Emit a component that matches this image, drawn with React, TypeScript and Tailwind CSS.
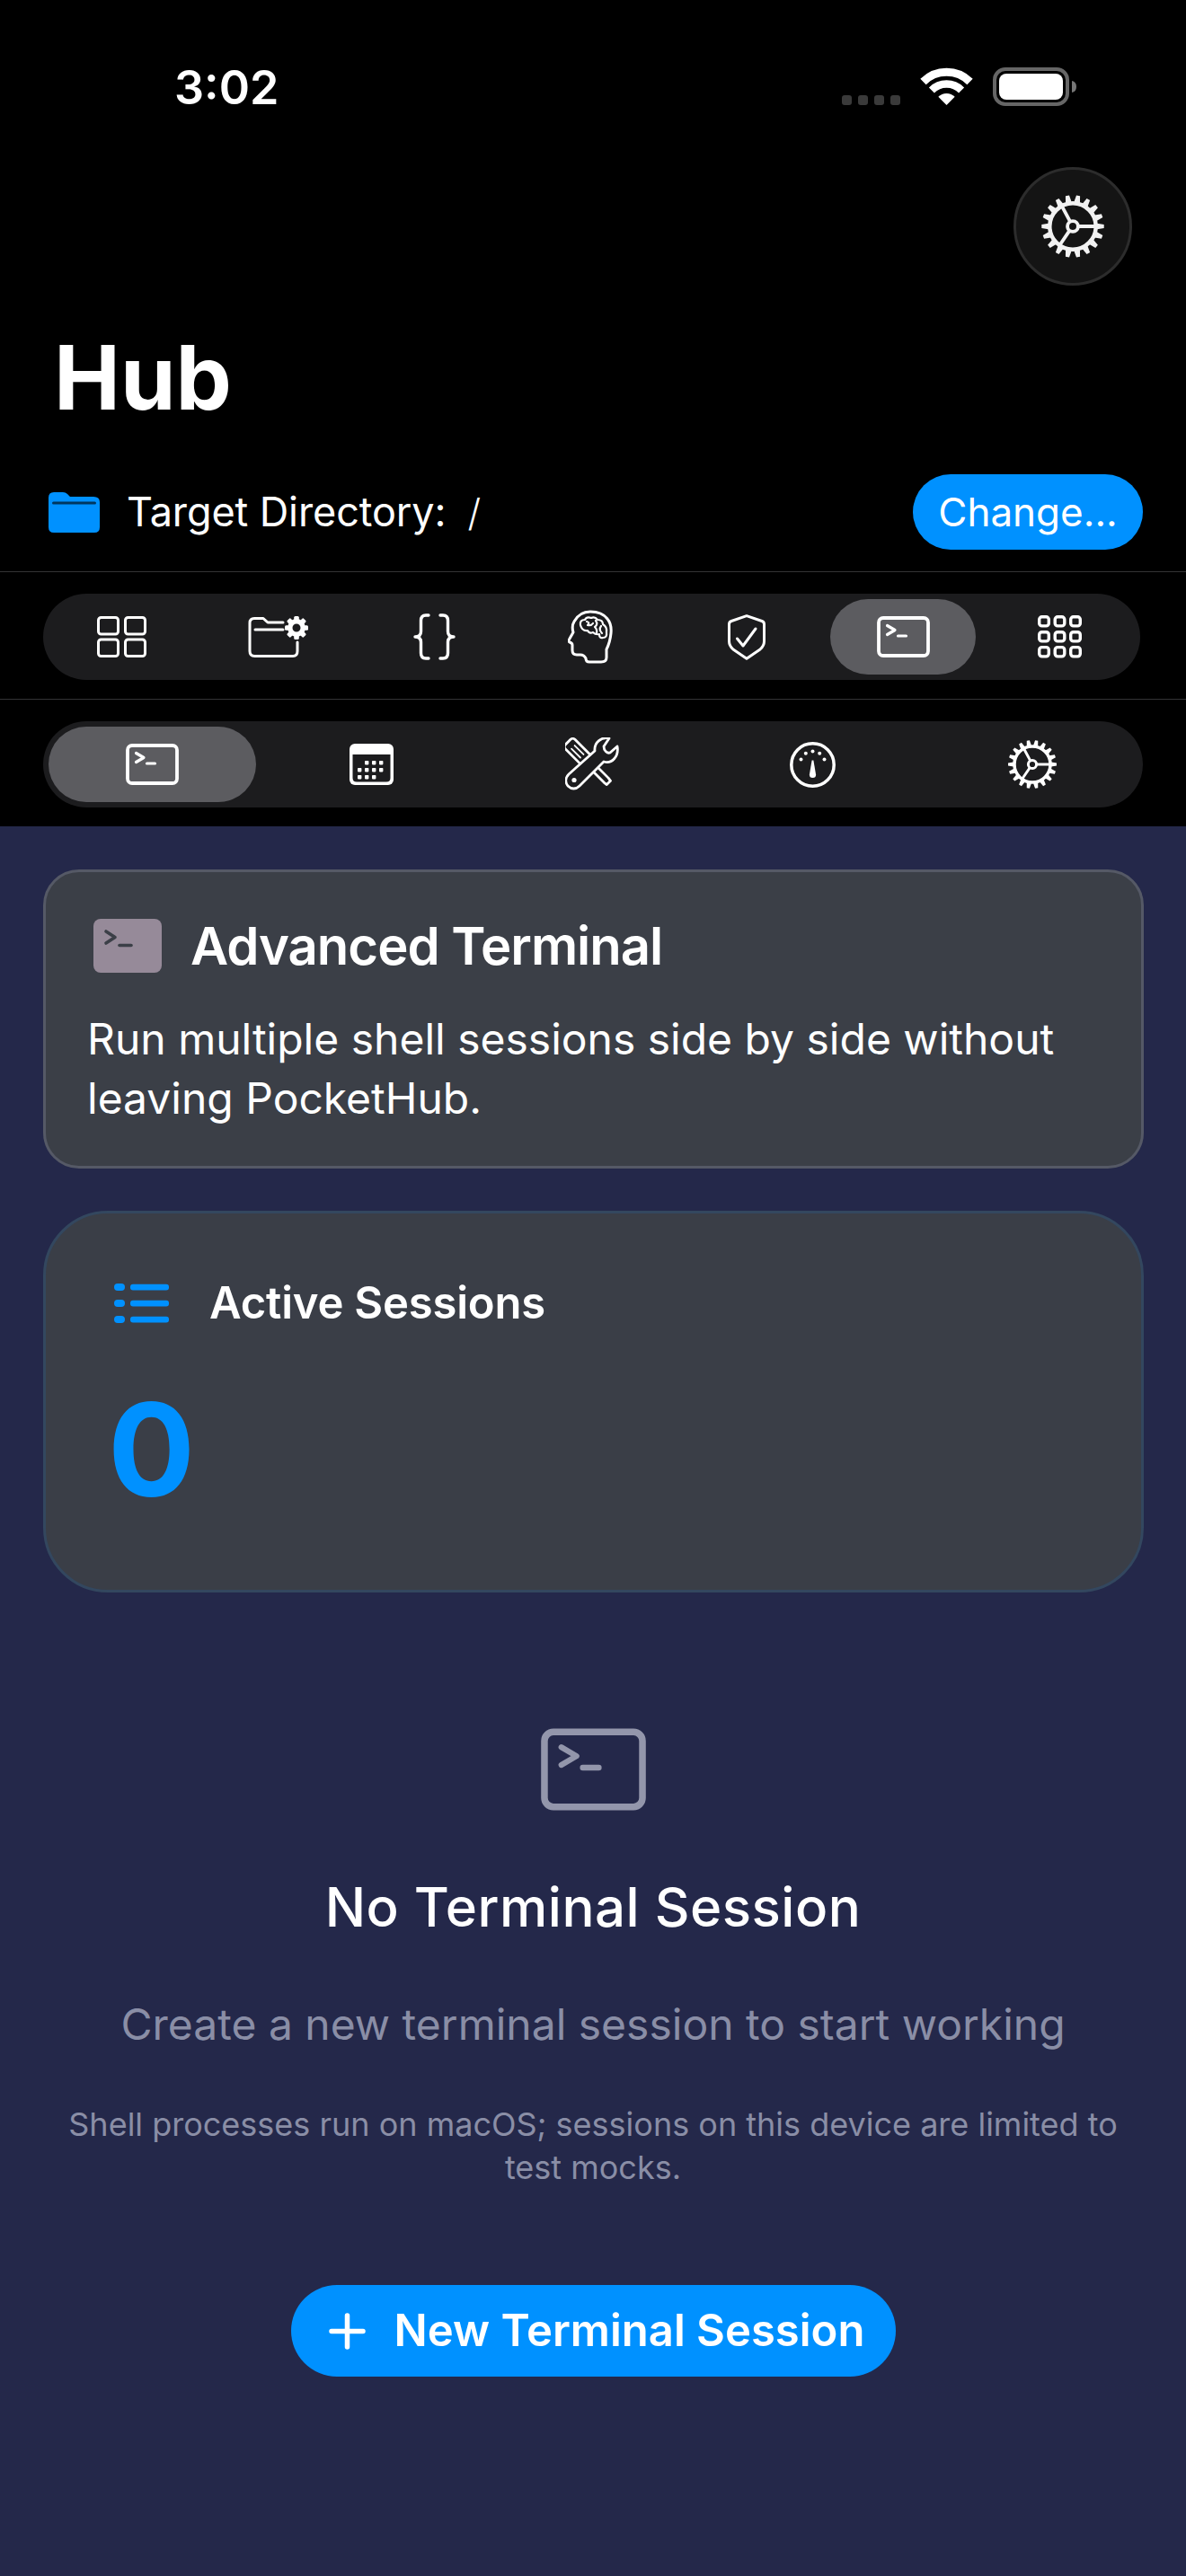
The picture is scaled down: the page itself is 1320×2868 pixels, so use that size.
import React from "react";

const cog = Array.from({ length: 18 }, (_, i) => i * 20);

function SpokeGear({ size, color = "#fff" }: { size: number; color?: string }) {
  return (
    <svg width={size} height={size} viewBox="-28 -28 56 56" fill="none" stroke={color}>
      <circle r="20" strokeWidth="3.5" />
      {cog.map((a) => (
        <path key={a} d="M-2.6 -21 L-1.6 -27 H1.6 L2.6 -21 Z" fill={color} stroke="none" transform={`rotate(${a + 10})`} />
      ))}
      <circle r="4.6" strokeWidth="3" />
      <path d="M5 0 H20 M-2.4 -4.4 L-9.6 -17.8 M-3 4 L-11.5 16.5" strokeWidth="3" />
    </svg>
  );
}

function TerminalIcon({ w, h, color = "#fff" }: { w: number; h: number; color?: string }) {
  return (
    <svg width={w} height={h} viewBox="0 0 59 46" fill="none" stroke={color}>
      <rect x="2" y="2" width="55" height="42" rx="5" strokeWidth="3.8" />
      <path d="M11.5 10.5 L20 15.5 L11.5 20.5" strokeWidth="3.2" strokeLinecap="round" strokeLinejoin="round" />
      <path d="M23.5 22 H32.5" strokeWidth="3.2" strokeLinecap="round" />
    </svg>
  );
}

function GridIcon() {
  return (
    <svg width="55" height="46" viewBox="0 0 55 46" fill="none" stroke="#fff" strokeWidth="3">
      <rect x="1.5" y="1.5" width="22" height="18.5" rx="3" />
      <rect x="31.5" y="1.5" width="22" height="18.5" rx="3" />
      <rect x="1.5" y="26" width="22" height="18.5" rx="3" />
      <rect x="31.5" y="26" width="22" height="18.5" rx="3" />
    </svg>
  );
}

function FolderGearIcon() {
  const teeth = [0, 45, 90, 135, 180, 225, 270, 315];
  return (
    <svg width="67" height="46" viewBox="0 0 67 46" fill="none" stroke="#fff">
      <path d="M39 7 H22 L17 2.5 H7 Q2 2.5 2 7.5 V39 Q2 44.5 7.5 44.5 H50 Q55 44.5 55 39 V29" strokeWidth="3" strokeLinecap="round" strokeLinejoin="round" />
      <path d="M8 15 H39" strokeWidth="3" strokeLinecap="round" />
      <g transform="translate(54 13)">
        <circle r="7.2" strokeWidth="5.4" />
        {teeth.map((a) => (
          <rect key={a} x="-2.8" y="-13" width="5.6" height="5" rx="1.5" fill="#fff" stroke="none" transform={`rotate(${a})`} />
        ))}
      </g>
    </svg>
  );
}

function BracesIcon() {
  return (
    <svg width="47" height="52" viewBox="0 0 47 52" fill="none" stroke="#fff" strokeWidth="3.4" strokeLinecap="round" strokeLinejoin="round">
      <path d="M17 2 H14 Q8.5 2 8.5 8 V20 Q8.5 26 2 26 Q8.5 26 8.5 32 V44 Q8.5 50 14 50 H17" />
      <path d="M30 2 H33 Q38.5 2 38.5 8 V20 Q38.5 26 45 26 Q38.5 26 38.5 32 V44 Q38.5 50 33 50 H30" />
    </svg>
  );
}

function BrainIcon() {
  return (
    <svg width="50" height="60" viewBox="0 0 50 60" fill="none" stroke="#fff" strokeLinecap="round" strokeLinejoin="round">
      <path d="M43 44 V53 Q43 58 37 58 H24 Q20 58 20 54 Q18 50 14 50 H10 Q5 50 5 45 V39 Q5 37 2 36 Q0 35 2 32 L6 25 Q4 18 7 13 Q13 2 25 2 Q38 2 44 10 Q49 16 48 26 Q47 36 43 44 Z" strokeWidth="3" />
      <path d="M14 17 Q13 11 19 11 Q21 7 26 9 Q30 7 33 11 Q39 11 39 16 Q44 19 43 25 Q44 31 39 31 Q35 32 35 27 Q31 28 28 25 Q24 27 22 23 Q16 24 14 17 Z" strokeWidth="2.2" />
      <path d="M21 13 Q25 14 22 17 Q26 18 28 15 M31 12 Q34 16 30 19 Q33 22 32 26 M37 18 Q34 22 38 26" strokeWidth="2.2" />
    </svg>
  );
}

function ShieldIcon() {
  return (
    <svg width="42" height="51" viewBox="0 0 42 51" fill="none" stroke="#fff" strokeLinecap="round" strokeLinejoin="round">
      <path d="M21 1.7 L38 7.5 Q40.5 8.3 40.5 11 V30 Q40.5 35 36 39 L21 49.3 L6 39 Q1.5 35 1.5 30 V11 Q1.5 8.3 4 7.5 Z" strokeWidth="3" />
      <path d="M10.5 27 L17 35 L31 16" strokeWidth="3" />
    </svg>
  );
}

function AppsIcon() {
  const pos = [0, 17.5, 35];
  return (
    <svg width="49" height="48" viewBox="0 0 49 48" fill="none" stroke="#fff" strokeWidth="3.4">
      {pos.map((x) =>
        pos.map((y) => <rect key={`${x}-${y}`} x={x + 1.7} y={y * 0.97 + 1.7} width="10.6" height="10.2" rx="3" />),
      )}
    </svg>
  );
}

function CalendarIcon() {
  const dots = [
    [17, 19], [25, 19], [33, 19],
    [9, 27], [17, 27], [25, 27], [33, 27],
    [9, 35], [17, 35], [25, 35],
  ];
  return (
    <svg width="49" height="46" viewBox="0 0 49 46">
      <rect width="49" height="46" rx="6" fill="#fff" />
      <path d="M3.5 12 H45.5 V38 Q45.5 42.5 41 42.5 H8 Q3.5 42.5 3.5 38 Z" fill="#1c1c1e" />
      {dots.map(([x, y]) => (
        <rect key={`${x}-${y}`} x={x} y={y} width="4.4" height="4.4" rx="0.8" fill="#fff" />
      ))}
    </svg>
  );
}

function ToolsIcon() {
  return (
    <svg width="60" height="60" viewBox="0 0 60 60" fill="none" stroke="#fff" strokeLinejoin="round" strokeLinecap="round">
      <g transform="translate(6 8) rotate(45)" strokeWidth="2.8">
        <rect x="-4" y="-7.5" width="32" height="15" rx="3.5" fill="#1c1c1e" />
        <path d="M4 -2.5 H18 M4 2.5 H18" strokeWidth="1.8" />
        <path d="M28 -3.5 H56 L60 -3 V3 L56 3.5 H28" fill="#1c1c1e" />
      </g>
      <path d="M49 1 C40 -1 32 6 33 15 L4 41 C0 45 0 50 3 54 C7 58 12 58 16 54 L43 27 C52 30 60 21 58 10 L50 17 C47 18 43 15 43 10 Z" fill="#1c1c1e" strokeWidth="2.8" />
      <circle cx="10" cy="47.5" r="2.6" fill="#fff" stroke="none" />
    </svg>
  );
}

function GaugeIcon() {
  return (
    <svg width="51" height="51" viewBox="-25.5 -25.5 51 51" fill="none" stroke="#fff">
      <circle r="23.7" strokeWidth="3.5" />
      {[[-13, -6], [-7.7, -12.7], [0, -15], [7.7, -12.7], [13, -6]].map(([x, y]) => (
        <circle key={x} cx={x} cy={y} r="2" fill="#fff" stroke="none" />
      ))}
      <path d="M-0.9 -5 H0.9 L3.6 11 A3.6 3.6 0 0 1 -3.6 11 Z" fill="#fff" stroke="none" />
    </svg>
  );
}

function StatusIcons() {
  return (
    <svg width="261" height="48" viewBox="0 0 261 48" fill="none">
      {[0, 18, 36, 54].map((x) => (
        <rect key={x} x={x} y="36" width="11" height="11" rx="3" fill="#3a3a3a" />
      ))}
      <g transform="translate(88 5)" stroke="#fff">
        <path d="M2.5 16 A37 37 0 0 1 54.5 16" strokeWidth="9" />
        <path d="M11.9 25.4 A23.5 23.5 0 0 1 45.1 25.4" strokeWidth="8.5" />
        <path d="M28.5 42 L19.3 32.8 A13 13 0 0 1 37.7 32.8 Z" fill="#fff" stroke="none" />
      </g>
      <rect x="170" y="7" width="81" height="39" rx="12" stroke="#666" strokeWidth="4" />
      <rect x="175" y="12" width="71" height="29" rx="8" fill="#fff" />
      <path d="M256 20 Q261 21 261 26.5 Q261 32 256 33 Z" fill="#777" />
    </svg>
  );
}

function TopFolder() {
  return (
    <svg width="57" height="45" viewBox="0 0 57 45">
      <path d="M0 6 Q0 0 6 0 H16 Q19 0 21 2 L24 5 H50 Q57 5 57 11 V39 Q57 45 51 45 H6 Q0 45 0 39 Z" fill="#0091ff" />
      <rect x="4" y="10.5" width="49" height="3" rx="1.5" fill="#00375f" />
    </svg>
  );
}

function ListIcon() {
  return (
    <svg width="61" height="44" viewBox="0 0 61 44" fill="#0091ff">
      {[0, 18, 36].map((y) => (
        <g key={y}>
          <rect x="0" y={y} width="12" height="8" rx="4" />
          <rect x="18" y={y + 0.8} width="43" height="6.6" rx="3" />
        </g>
      ))}
    </svg>
  );
}

function TabPill({ items, active, width, cell }: { items: React.ReactNode[]; active: number; width: string; cell: (i: number) => string }) {
  return (
    <div className={`flex h-[96px] ml-[48px] rounded-[48px] bg-[#1c1c1e] ${width}`}>
      {items.map((item, i) => (
        <div key={i} className={`flex p-[6px] ${cell(i)}`}>
          <div className={`flex-1 flex items-center justify-center rounded-[42px] ${i === active ? "bg-[#5c5c60]" : ""}`}>
            {item}
          </div>
        </div>
      ))}
    </div>
  );
}

export default function App() {
  return (
    <div className="w-[1320px] h-[2868px] bg-[#24284a] text-white flex flex-col font-['Inter',sans-serif] overflow-hidden">
      <header className="bg-black h-[920px] shrink-0">
        <div className="h-[186px] flex items-start">
          <div className="ml-[194px] mt-[72px] text-[52px] leading-none font-semibold">3:02</div>
          <div className="ml-auto mr-[122px] mt-[70px]">
            <StatusIcons />
          </div>
        </div>
        <div className="flex justify-end pr-[60px]">
          <div className="w-[132px] h-[132px] rounded-full bg-[#141414] border-[3px] border-[#2c2c2c] flex items-center justify-center">
            <SpokeGear size={72} color="#f2f2f2" />
          </div>
        </div>
        <h1 className="mt-[53px] ml-[60px] text-[99px] leading-none font-bold">Hub</h1>
        <div className="mt-[58px] h-[84px] flex items-center pl-[54px] pr-[48px]">
          <TopFolder />
          <span className="ml-[30px] text-[45px] tracking-[-0.1px]">Target Directory:</span>
          <span className="ml-[24px] text-[42px] font-light">/</span>
          <div className="ml-auto w-[256px] h-[84px] rounded-[42px] bg-[#0091ff] flex items-center justify-center text-[44px]">
            Change...
          </div>
        </div>
        <div className="mt-[24px] border-t border-[#333335]" />
        <div className="mt-[24px]">
          <TabPill
            width="w-[1221px]"
            active={5}
            cell={() => "w-[174px] shrink-0"}
            items={[
              <GridIcon key="a" />,
              <FolderGearIcon key="b" />,
              <BracesIcon key="c" />,
              <BrainIcon key="d" />,
              <ShieldIcon key="e" />,
              <TerminalIcon key="f" w={59} h={46} />,
              <AppsIcon key="g" />,
            ]}
          />
        </div>
        <div className="mt-[21px] border-t border-[#333335]" />
        <div className="mt-[24px]">
          <TabPill
            width="w-[1224px]"
            active={0}
            cell={(i) => (i === 0 ? "w-[243px] shrink-0" : "flex-1")}
            items={[
              <TerminalIcon key="a" w={59} h={46} />,
              <CalendarIcon key="b" />,
              <ToolsIcon key="c" />,
              <GaugeIcon key="d" />,
              <SpokeGear key="e" size={56} />,
            ]}
          />
        </div>
      </header>

      <section className="mt-[48px] ml-[48px] mr-[47px] h-[333px] rounded-[40px] bg-[#3b3f47] border-[3px] border-[#555966] px-[44px] pt-[52px]">
        <div className="flex items-center pl-[9px]">
          <div className="w-[76px] h-[60px] rounded-[8px] bg-[#968a99] shrink-0">
            <svg width="76" height="60" viewBox="0 0 76 60" fill="none" stroke="#3b3f47" strokeWidth="3.6" strokeLinecap="round" strokeLinejoin="round">
              <path d="M14 14 L24 20.5 L14 27" />
              <path d="M29 29.5 H42" />
            </svg>
          </div>
          <h2 className="ml-[32px] text-[58px] leading-none font-semibold tracking-[-1px]">Advanced Terminal</h2>
        </div>
        <p className="mt-[41px] pl-[2px] text-[48px] leading-[66px]">
          Run multiple shell sessions side by side without leaving PocketHub.
        </p>
      </section>

      <section className="mt-[47px] ml-[48px] mr-[47px] h-[425px] rounded-[72px] bg-[#3a3e47] border-[3px] border-[#33475f] px-[66px] pt-[78px]">
        <div className="flex items-center pl-[10px]">
          <ListIcon />
          <h2 className="ml-[45px] text-[49px] leading-[44px] font-semibold tracking-[-0.2px]">Active Sessions</h2>
        </div>
        <div className="mt-[69px] pl-[3px] text-[144px] leading-none font-bold text-[#0091ff]">0</div>
      </section>

      <section className="mt-[151px] flex flex-col items-center text-center">
        <TerminalIcon w={117} h={92} color="#9396ab" />
        <h2 className="mt-[77px] text-[60px] leading-none font-medium tracking-[0.5px]">No Terminal Session</h2>
        <p className="mt-[77px] text-[48px] leading-none text-[#8a8ea6]">Create a new terminal session to start working</p>
        <p className="mt-[63px] w-[1180px] text-[36px] leading-[48px] text-[#8a8ea6]">
          Shell processes run on macOS; sessions on this device are limited to test mocks.
        </p>
        <div className="mt-[107px] w-[673px] h-[102px] rounded-[51px] bg-[#0091ff] flex items-center pl-[42px]">
          <svg width="41" height="41" viewBox="0 0 41 41" fill="none" stroke="#fff" strokeWidth="5.5" strokeLinecap="round">
            <path d="M20.5 3 V38 M3 20.5 H38" />
          </svg>
          <span className="ml-[32px] text-[49px] font-semibold">New Terminal Session</span>
        </div>
      </section>
    </div>
  );
}
